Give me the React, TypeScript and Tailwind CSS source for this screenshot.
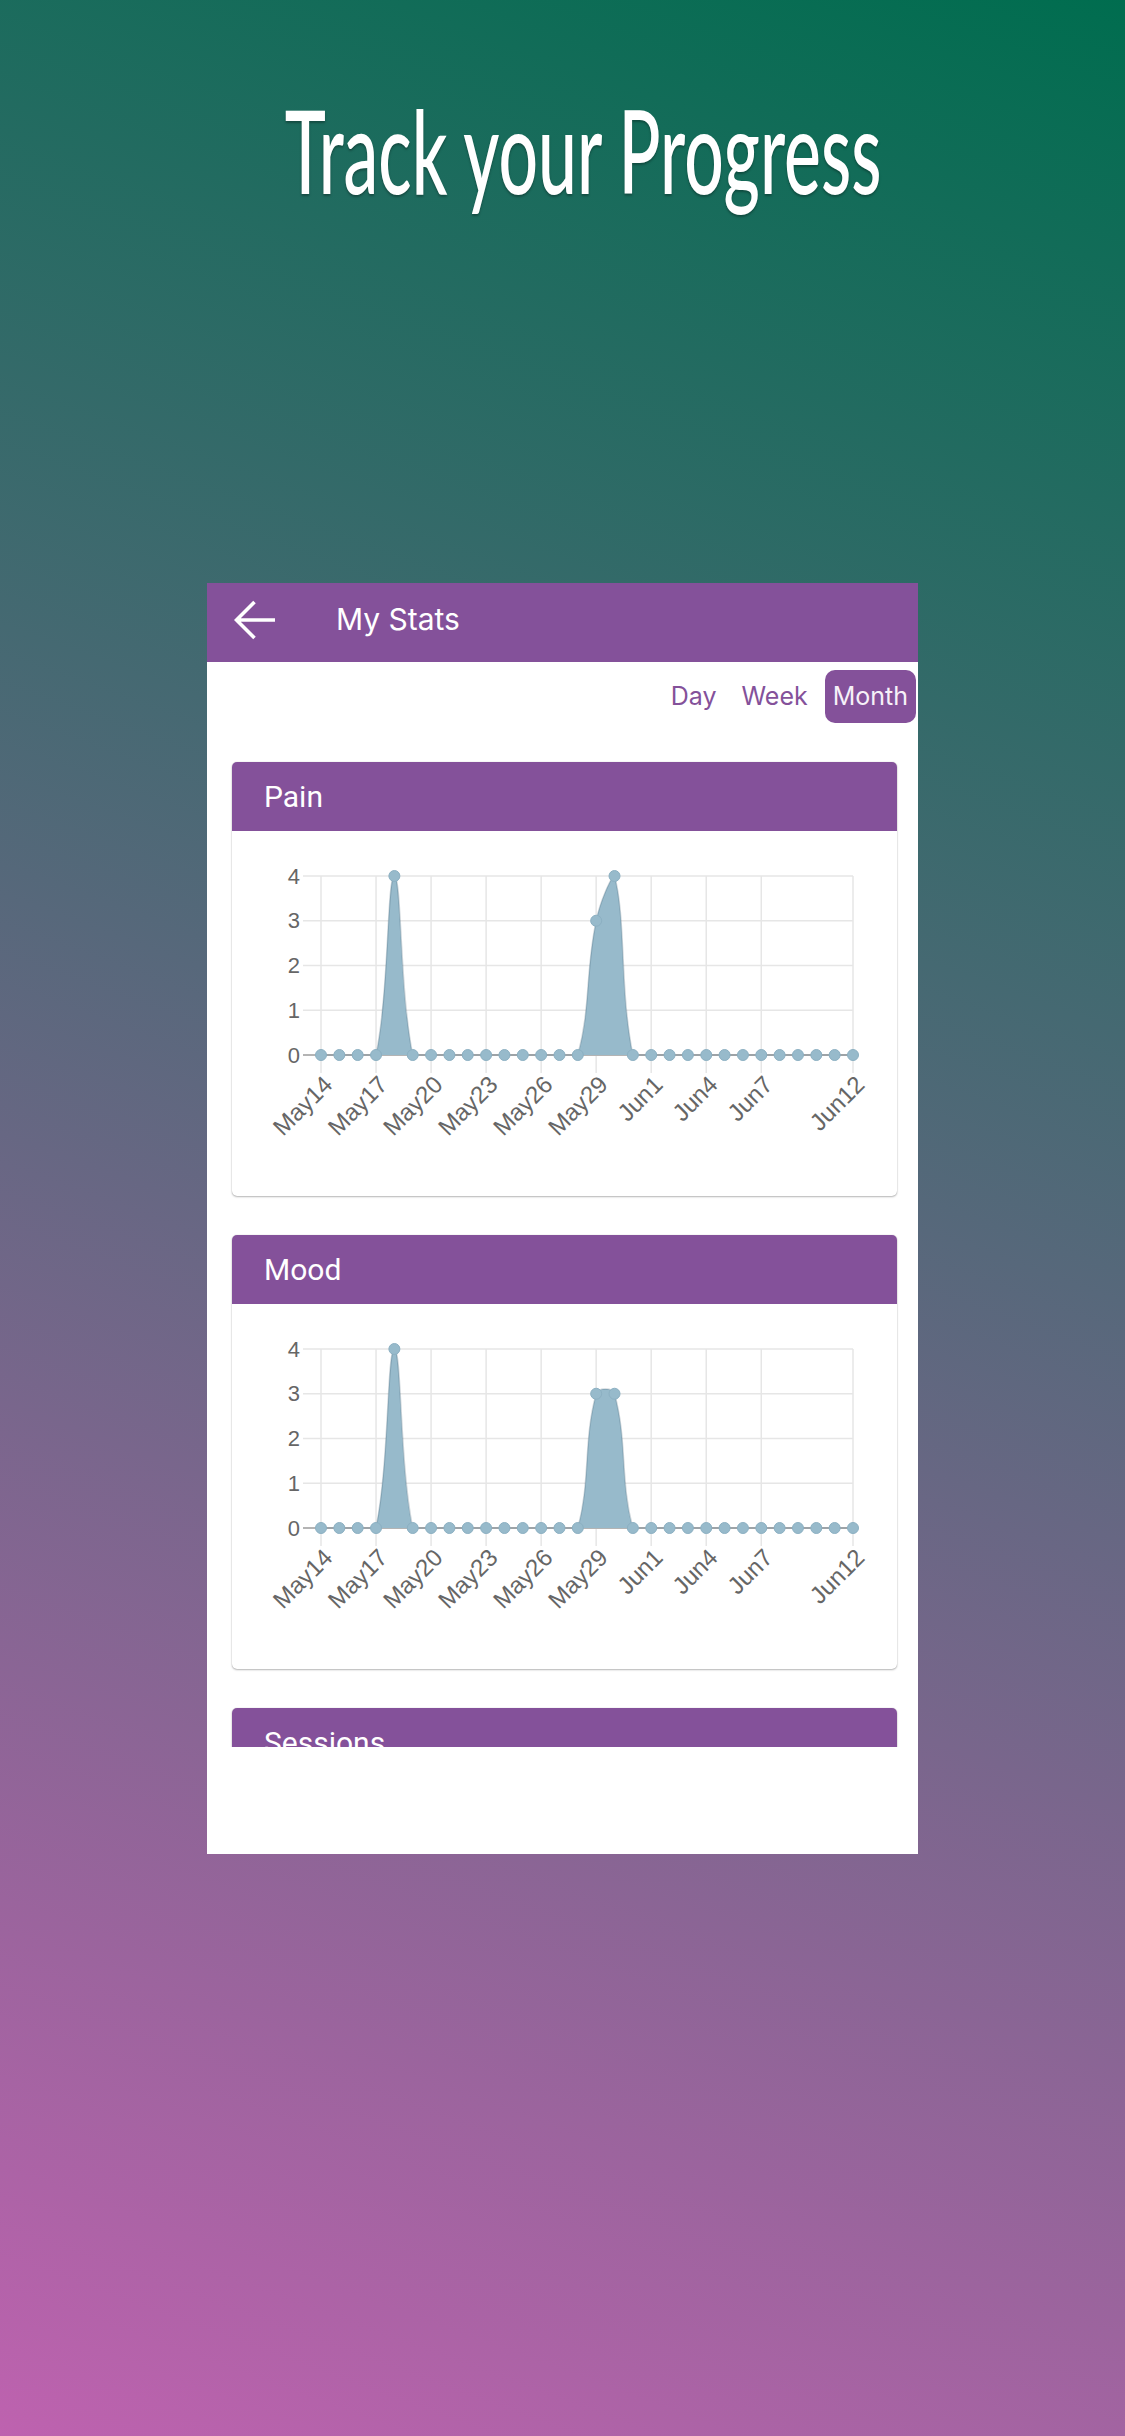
import React from "react";

// Day labels for the month view: May 14 .. Jun 12
const LABELS: string[] = (() => {
  const out: string[] = [];
  for (let d = 14; d <= 31; d++) out.push(`May${d}`);
  for (let d = 1; d <= 12; d++) out.push(`Jun${d}`);
  return out;
})();
const TICKS = [0, 3, 6, 9, 12, 15, 18, 21, 24, 29];

const PAIN = LABELS.map((_, i) => (i === 4 ? 4 : i === 15 ? 3 : i === 16 ? 4 : 0));
const MOOD = LABELS.map((_, i) => (i === 4 ? 4 : i === 15 ? 3 : i === 16 ? 3 : 0));

// chart geometry
const W = 665;
const H = 365;
const LEFT = 89;
const RIGHT = 621;
const TOP = 45;
const ZERO = 224;
const STEP = (RIGHT - LEFT) / (LABELS.length - 1);
const UNIT = (ZERO - TOP) / 4;

type Pt = { x: number; y: number };

function buildCurve(values: number[]) {
  const pts: Pt[] = values.map((v, i) => ({ x: LEFT + i * STEP, y: ZERO - v * UNIT }));
  const t = 0.4;
  const cap = (y: number) => Math.min(ZERO, Math.max(TOP, y));
  const cps = pts.map((cur, i) => {
    const prev = pts[i - 1] ?? cur;
    const next = pts[i + 1] ?? cur;
    const d01 = Math.hypot(cur.x - prev.x, cur.y - prev.y);
    const d12 = Math.hypot(next.x - cur.x, next.y - cur.y);
    let s01 = d01 / (d01 + d12);
    let s12 = d12 / (d01 + d12);
    if (!isFinite(s01)) s01 = 0;
    if (!isFinite(s12)) s12 = 0;
    const fa = t * s01;
    const fb = t * s12;
    return {
      inX: cur.x - fa * (next.x - prev.x),
      inY: cap(cur.y - fa * (next.y - prev.y)),
      outX: cur.x + fb * (next.x - prev.x),
      outY: cap(cur.y + fb * (next.y - prev.y)),
    };
  });
  let d = `M${pts[0].x},${pts[0].y}`;
  for (let i = 1; i < pts.length; i++) {
    d += ` C${cps[i - 1].outX},${cps[i - 1].outY} ${cps[i].inX},${cps[i].inY} ${pts[i].x},${pts[i].y}`;
  }
  return { pts, line: d, area: `${d} L${RIGHT},${ZERO} L${LEFT},${ZERO} Z` };
}

function StatChart({ values }: { values: number[] }) {
  const { pts, line, area } = buildCurve(values);
  return (
    <svg width={W} height={H} viewBox={`0 0 ${W} ${H}`} className="block">
      {/* horizontal grid */}
      {[0, 1, 2, 3, 4].map((v) => (
        <line
          key={`h${v}`}
          x1={71}
          x2={RIGHT}
          y1={ZERO - v * UNIT}
          y2={ZERO - v * UNIT}
          stroke="#e6e6e6"
          strokeWidth={1.5}
        />
      ))}
      {/* vertical grid */}
      {TICKS.map((i) => (
        <line
          key={`v${i}`}
          x1={LEFT + i * STEP}
          x2={LEFT + i * STEP}
          y1={TOP}
          y2={ZERO + 18}
          stroke="#e6e6e6"
          strokeWidth={1.5}
        />
      ))}
      {/* y labels */}
      {[0, 1, 2, 3, 4].map((v) => (
        <text
          key={`y${v}`}
          x={68}
          y={ZERO - v * UNIT}
          textAnchor="end"
          dominantBaseline="central"
          fontFamily="'Liberation Sans', Arial, sans-serif"
          fontSize={22}
          fill="#666"
        >
          {v}
        </text>
      ))}
      {/* x labels */}
      {TICKS.map((i) => {
        const x = LEFT + i * STEP + 7;
        const y = ZERO + 25;
        return (
          <text
            key={`x${i}`}
            x={x}
            y={y}
            textAnchor="end"
            dominantBaseline="central"
            transform={`rotate(-45 ${x} ${y})`}
            fontFamily="'Liberation Sans', Arial, sans-serif"
            fontSize={24}
            fill="#666"
          >
            {LABELS[i]}
          </text>
        );
      })}
      {/* zero axis */}
      <line x1={71} x2={RIGHT} y1={ZERO} y2={ZERO} stroke="#b4b4b4" strokeWidth={2} />
      {/* data */}
      <path d={area} fill="#97bacb" />
      <path d={line} fill="none" stroke="rgba(60,90,110,0.25)" strokeWidth={1.5} />
      {pts.map((p, i) => (
        <circle key={`p${i}`} cx={p.x} cy={p.y} r={5.5} fill="#97bacb" stroke="#8cb0c2" strokeWidth={1} />
      ))}
    </svg>
  );
}

function Card({ title, values }: { title: string; values?: number[] }) {
  return (
    <div className="ml-[25px] mr-[21px] mt-[39px] shrink-0 overflow-hidden rounded-[5px] bg-white shadow-[0_1px_2px_rgba(0,0,0,0.28),0_0_1px_rgba(0,0,0,0.25)]">
      <div className="flex h-[69px] items-center bg-[#84519a] pl-[32px] font-['Roboto',sans-serif] text-[30px] text-white">
        {title}
      </div>
      {values ? <StatChart values={values} /> : <div className="h-[365px]" />}
    </div>
  );
}

export default function App() {
  return (
    <div className="flex h-[2436px] w-[1125px] flex-col items-center overflow-hidden bg-[linear-gradient(200deg,#006d4f_0%,#be62af_100%)]">
      <h1 className="mt-[92px] h-[116px] w-full whitespace-nowrap pl-[42px] text-center font-['Lato',sans-serif] text-[116px] font-medium leading-none text-white [text-shadow:0_2px_3px_rgba(0,0,0,0.3)]">
        <span className="inline-block scale-x-[0.6]">Track your Progress</span>
      </h1>

      <div className="mt-[375px] flex h-[1271px] w-[711px] flex-col bg-white font-['Inter',sans-serif]">
        {/* top bar */}
        <div className="flex h-[79px] shrink-0 items-center bg-[#84519a] pb-[6px]">
          <svg width="42" height="40" viewBox="0 0 42 40" className="ml-[27px]">
            <path d="M2.5 20 H41 M20.5 2 L2.5 20 L20.5 38" fill="none" stroke="#fff" strokeWidth="3.6" />
          </svg>
          <span className="ml-[60px] text-[30px] text-white">My Stats</span>
        </div>

        {/* scrolling content */}
        <div className="flex h-[1085px] shrink-0 flex-col overflow-hidden">
          <div className="flex justify-end gap-[9px] pr-[2px] pt-2">
            <button className="h-[53px] rounded-[10px] px-2 text-[25px] text-[#84519a]">Day</button>
            <button className="h-[53px] rounded-[10px] px-2 text-[25px] text-[#84519a]">Week</button>
            <button className="h-[53px] rounded-[10px] bg-[#84519a] px-2 text-[25px] text-[#f6f0f8]">Month</button>
          </div>
          <Card title="Pain" values={PAIN} />
          <Card title="Mood" values={MOOD} />
          <Card title="Sessions" />
        </div>

        {/* bottom area */}
        <div className="h-[107px] shrink-0 bg-white" />
      </div>
    </div>
  );
}
